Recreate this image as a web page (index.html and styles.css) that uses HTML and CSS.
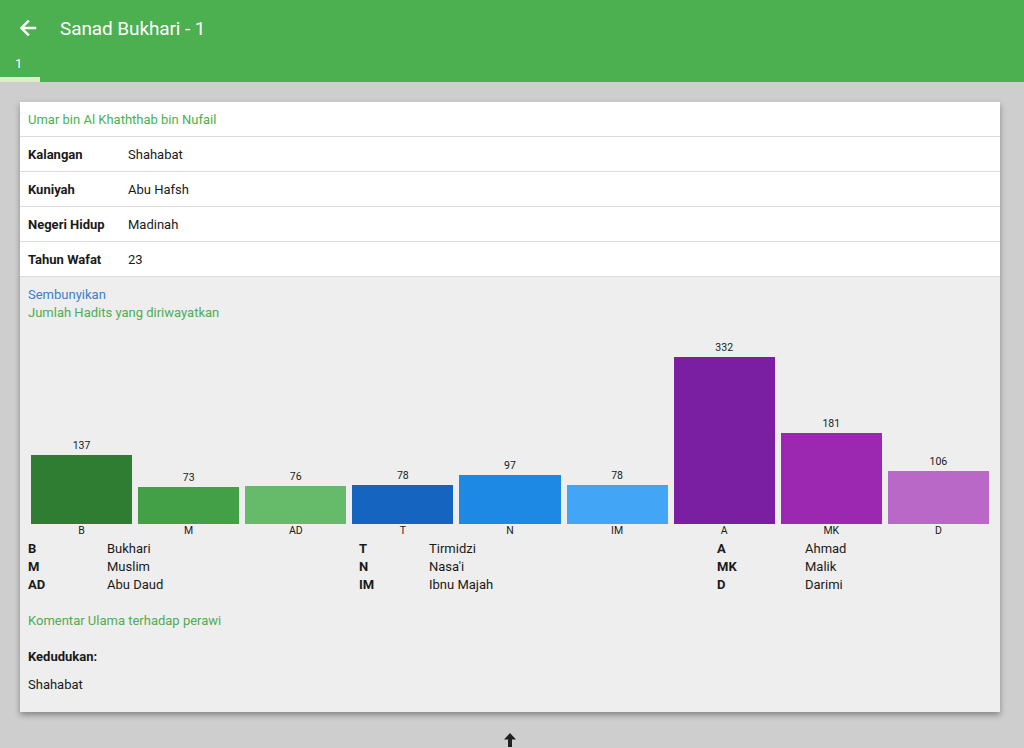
FILE: index.html
```html
<!DOCTYPE html>
<html>
<head>
<meta charset="utf-8">
<link rel="stylesheet" href="styles.css">
</head>
<body>
<header class="appbar">
  <div class="toolbar">
    <svg class="back" width="24" height="24" viewBox="0 0 24 24"><path d="M20 11H7.83l5.59-5.59L12 4l-8 8 8 8 1.41-1.41L7.83 13H20v-2z" fill="#fff" stroke="#fff" stroke-width="0.5"/></svg>
    <div class="title">Sanad Bukhari - 1</div>
  </div>
  <div class="tabs">
    <div class="tab active">1</div>
  </div>
</header>

<main class="card">
  <div class="row head">Umar bin Al Khaththab bin Nufail</div>
  <div class="row"><span class="label">Kalangan</span><span class="value">Shahabat</span></div>
  <div class="row"><span class="label">Kuniyah</span><span class="value">Abu Hafsh</span></div>
  <div class="row"><span class="label">Negeri Hidup</span><span class="value">Madinah</span></div>
  <div class="row"><span class="label">Tahun Wafat</span><span class="value">23</span></div>

  <section class="details">
    <div class="link">Sembunyikan</div>
    <div class="green">Jumlah Hadits yang diriwayatkan</div>

    <div class="chart">
      <div class="col"><span class="num">137</span><div class="bar c1" style="height:69px"></div></div>
      <div class="col"><span class="num">73</span><div class="bar c2" style="height:37px"></div></div>
      <div class="col"><span class="num">76</span><div class="bar c3" style="height:38px"></div></div>
      <div class="col"><span class="num">78</span><div class="bar c4" style="height:39px"></div></div>
      <div class="col"><span class="num">97</span><div class="bar c5" style="height:49px"></div></div>
      <div class="col"><span class="num">78</span><div class="bar c6" style="height:39px"></div></div>
      <div class="col"><span class="num">332</span><div class="bar c7" style="height:167px"></div></div>
      <div class="col"><span class="num">181</span><div class="bar c8" style="height:91px"></div></div>
      <div class="col"><span class="num">106</span><div class="bar c9" style="height:53px"></div></div>
    </div>
    <div class="axis">
      <span>B</span><span>M</span><span>AD</span><span>T</span><span>N</span><span>IM</span><span>A</span><span>MK</span><span>D</span>
    </div>

    <div class="legend">
      <b>B</b><span>Bukhari</span><b>T</b><span>Tirmidzi</span><b>A</b><span>Ahmad</span>
      <b>M</b><span>Muslim</span><b>N</b><span>Nasa'i</span><b>MK</b><span>Malik</span>
      <b>AD</b><span>Abu Daud</span><b>IM</b><span>Ibnu Majah</span><b>D</b><span>Darimi</span>
    </div>

    <div class="green komentar">Komentar Ulama terhadap perawi</div>
    <div class="kedudukan">Kedudukan:</div>
    <div class="plain">Shahabat</div>
  </section>
</main>

<div class="scrollup">
  <svg width="12" height="14" viewBox="0 0 12 14"><path d="M6 0 L12 6.5 H8 V14 H4 V6.5 H0 Z" fill="#222"/></svg>
</div>
</body>
</html>
```

FILE: styles.css
```css
html, body {
  margin: 0;
  padding: 0;
}
body {
  background: #cecece;
  font-family: Roboto, "Liberation Sans", sans-serif;
  font-size: 13px;
  color: #1a1a1a;
  width: 1024px;
  height: 748px;
  overflow: hidden;
}
.appbar {
  background: #4caf50;
  height: 82px;
  color: #fff;
}
.toolbar {
  height: 56px;
  display: flex;
  align-items: center;
}
.back {
  margin-left: 16px;
  width: 24px;
  height: 24px;
}
.title {
  margin-left: 20px;
  font-size: 19px;
  letter-spacing: -0.1px;
}
.tabs {
  height: 26px;
  display: flex;
}
.tab {
  width: 40px;
  box-sizing: border-box;
  padding-left: 15px;
  font-size: 13px;
  line-height: 16px;
}
.tab.active {
  border-bottom: 5px solid #dcedc8;
  height: 26px;
}
.card {
  margin: 20px 24px 0 20px;
  background: #fff;
  box-shadow: 0 3px 6px rgba(0,0,0,0.35);
}
.row {
  height: 34px;
  border-bottom: 1px solid #dcdcdc;
  display: flex;
  align-items: center;
  padding-left: 8px;
}
.row.head {
  color: #4caf50;
}
.label {
  font-weight: bold;
  width: 100px;
}
.details {
  background: #eeeeee;
  padding: 9px 8px 18px 8px;
  line-height: 18px;
}
.link {
  color: #3b7fd0;
}
.green {
  color: #4caf50;
}
.chart {
  height: 202px;
  display: flex;
  align-items: flex-end;
}
.col {
  flex: 1;
  padding: 0 3px;
  display: flex;
  flex-direction: column;
  align-items: center;
}
.num {
  font-size: 10.5px;
  line-height: 12px;
  margin-bottom: 3px;
}
.bar {
  width: 100%;
}
.c1 { background: #2e7d32; }
.c2 { background: #43a047; }
.c3 { background: #66bb6a; }
.c4 { background: #1565c0; }
.c5 { background: #1e88e5; }
.c6 { background: #42a5f5; }
.c7 { background: #7b1fa2; }
.c8 { background: #9c27b0; }
.c9 { background: #ba68c8; }
.axis {
  display: flex;
  height: 16px;
  font-size: 10.5px;
  line-height: 14px;
}
.axis span {
  flex: 1;
  text-align: center;
}
.legend {
  display: grid;
  grid-template-columns: 79px 252px 70px 288px 88px auto;
  line-height: 18px;
}
.legend b {
  font-weight: bold;
}
.komentar {
  margin-top: 18px;
}
.kedudukan {
  margin-top: 18px;
  font-weight: bold;
}
.plain {
  margin-top: 10px;
}
.scrollup {
  display: flex;
  justify-content: center;
  padding-top: 21px;
  padding-right: 4px;
}
```
